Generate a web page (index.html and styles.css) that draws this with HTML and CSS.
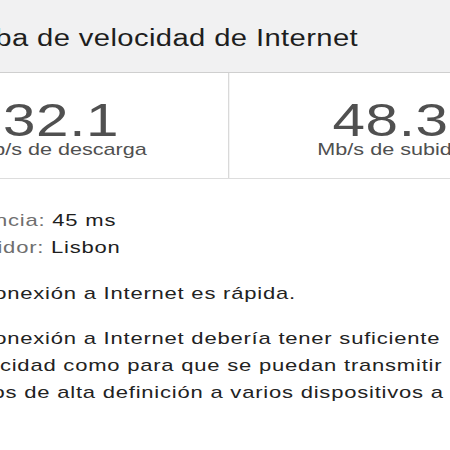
FILE: index.html
```html
<!DOCTYPE html>
<html lang="es">
<head>
<meta charset="utf-8">
<title>Prueba de velocidad de Internet</title>
<link rel="stylesheet" href="styles.css">
</head>
<body>
<div class="page">
  <header class="header">
    <h1 class="title">Prueba de velocidad de Internet</h1>
  </header>
  <section class="stats">
    <div class="stat">
      <div class="stat-value">32.1</div>
      <div class="stat-label">Mb/s de descarga</div>
    </div>
    <div class="stat stat-right">
      <div class="stat-value">48.3</div>
      <div class="stat-label">Mb/s de subida</div>
    </div>
  </section>
  <section class="info">
    <div class="details">
      <div class="detail"><span class="detail-label">Latencia:</span> <span class="detail-value">45 ms</span></div>
      <div class="detail"><span class="detail-label">Servidor:</span> <span class="detail-value">Lisbon</span></div>
    </div>
    <p class="summary">Tu conexión a Internet es rápida.</p>
    <p class="description">Tu conexión a Internet debería tener suficiente<br>capacidad como para que se puedan transmitir<br>videos de alta definición a varios dispositivos a la vez.</p>
  </section>
</div>
</body>
</html>
```

FILE: styles.css
```css
html, body {
  margin: 0;
  padding: 0;
  background: #ffffff;
  overflow: hidden;
}

.page {
  width: 526px;
  margin-left: -106px;
  transform: scaleX(1.27);
  transform-origin: 0 0;
  font-family: "Liberation Sans", Arial, sans-serif;
  color: #222222;
}

.header {
  height: 73px;
  box-sizing: border-box;
  padding: 24.5px 0 0 30px;
  background: #f1f1f2;
  border-bottom: 1px solid #cfcfcf;
}

.title {
  margin: 0;
  font-size: 23px;
  line-height: 27px;
  font-weight: normal;
  letter-spacing: 0.3px;
  color: #1e1e1e;
  white-space: nowrap;
}

.stats {
  display: grid;
  grid-template-columns: 263px 255px;
  border-bottom: 1.5px solid #dddddd;
}

.stat {
  padding: 27px 0 18px;
  text-align: center;
  color: #505050;
}

.stat-right {
  border-left: 1.5px solid #d9d9d9;
}

.stat-value {
  font-size: 46px;
  line-height: 40px;
  letter-spacing: 0.5px;
}

.stat-label {
  font-size: 17px;
  line-height: 20px;
  white-space: nowrap;
}

.info {
  padding: 27.5px 0 0 42.5px;
  font-size: 17px;
  line-height: 27px;
  letter-spacing: 0.6px;
  transform: scaleX(1.02);
  transform-origin: 0 0;
}

.detail-label {
  color: #6f6f6f;
}

.detail-value {
  color: #1e1e1e;
}

.summary {
  margin: 19px 0 0;
}

.description {
  margin: 18px 0 0;
  white-space: nowrap;
}
```
